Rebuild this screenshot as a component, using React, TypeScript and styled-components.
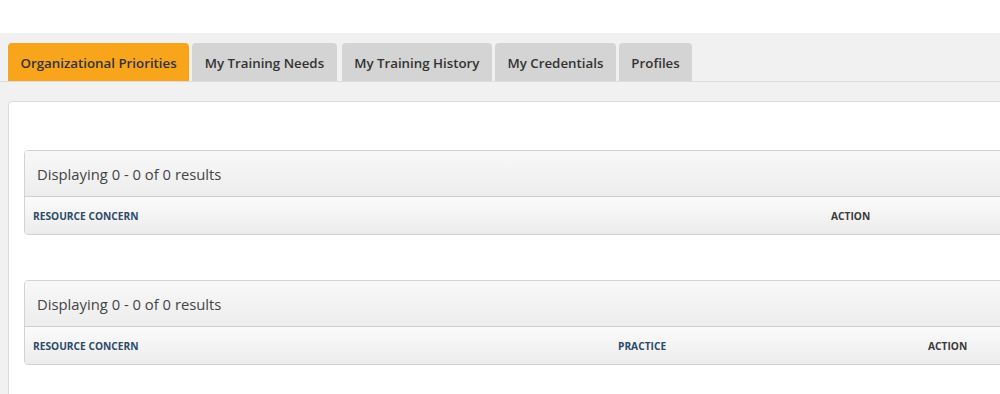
import React from "react";
import styled, { createGlobalStyle } from "styled-components";

const Global = createGlobalStyle`
  html, body { margin: 0; padding: 0; background: #ffffff; }
  body { font-family: "Open Sans", "Liberation Sans", Arial, sans-serif; overflow: hidden; }
  * { box-sizing: border-box; }
`;

const Page = styled.div`
  width: 1000px;
  height: 394px;
  overflow: hidden;
  padding-top: 33px;
`;

const Backdrop = styled.div`
  background: #f1f1f1;
  height: 361px;
  padding: 10px 0 0 8px;
`;

const TabBar = styled.div`
  display: flex;
  gap: 3px;
  border-bottom: 1px solid #dcdcdc;
  width: 1100px;
  margin-left: -8px;
  padding-left: 8px;
`;

const Tab = styled.div<{ $active?: boolean; $gap?: number }>`
  height: 38px;
  display: flex;
  align-items: center;
  padding: 1px 12.5px 0;
  margin-right: ${(p) => p.$gap ?? 0}px;
  font-size: 13.3px;
  font-weight: 600;
  color: #333;
  background: ${(p) => (p.$active ? "#f9a51c" : "#d4d4d4")};
  border-radius: 4px 4px 0 0;
  white-space: nowrap;
`;

const Panel = styled.div`
  margin-top: 19px;
  width: 1100px;
  height: 300px;
  background: #ffffff;
  border: 1px solid #dcdcdc;
  border-radius: 4px 0 0 0;
  padding: 48px 0 0 15px;
  display: flex;
  flex-direction: column;
  gap: 45px;
`;

const Grid = styled.div`
  width: 1080px;
  border: 1px solid #d2d2d2;
  border-radius: 4px 0 0 4px;
  overflow: hidden;
`;

const Summary = styled.div`
  height: 46px;
  display: flex;
  align-items: center;
  padding-left: 12px;
  font-size: 14.8px;
  font-weight: 500;
  color: #444;
  background: linear-gradient(#f8f8f8, #ededed);
  border-bottom: 1px solid #cfcfcf;
`;

const HeadRow = styled.div<{ $cols: string }>`
  height: 37px;
  display: grid;
  grid-template-columns: ${(p) => p.$cols};
  align-items: center;
  background: linear-gradient(#fbfbfb, #ececec);
`;

const HeadCell = styled.div<{ $link?: boolean }>`
  padding-left: 8px;
  font-size: 10.2px;
  font-weight: 700;
  text-transform: uppercase;
  color: ${(p) => (p.$link ? "#2d4a68" : "#3a3a3a")};
`;

const tabs = [
  { label: "Organizational Priorities", active: true },
  { label: "My Training Needs", gap: 2 },
  { label: "My Training History" },
  { label: "My Credentials" },
  { label: "Profiles" },
];

export default function App() {
  return (
    <Page>
      <Global />
      <Backdrop>
        <TabBar>
          {tabs.map((t) => (
            <Tab key={t.label} $active={t.active} $gap={t.gap}>
              {t.label}
            </Tab>
          ))}
        </TabBar>
        <Panel>
          <Grid>
            <Summary>Displaying 0 - 0 of 0 results</Summary>
            <HeadRow $cols="798px 1fr">
              <HeadCell $link>Resource Concern</HeadCell>
              <HeadCell>Action</HeadCell>
            </HeadRow>
          </Grid>
          <Grid>
            <Summary>Displaying 0 - 0 of 0 results</Summary>
            <HeadRow $cols="585px 310px 1fr">
              <HeadCell $link>Resource Concern</HeadCell>
              <HeadCell $link>Practice</HeadCell>
              <HeadCell>Action</HeadCell>
            </HeadRow>
          </Grid>
        </Panel>
      </Backdrop>
    </Page>
  );
}
